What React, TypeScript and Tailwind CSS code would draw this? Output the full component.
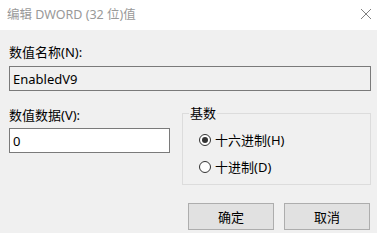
const font = { fontFamily: '"Noto Sans", "Noto Sans CJK SC", sans-serif' };

function Radio({ checked, label }: { checked?: boolean; label: string }) {
  return (
    <div className="flex items-center gap-[4px] h-[16px]">
      <span className="w-[12px] h-[12px] rounded-full border border-[#333333] bg-white flex items-center justify-center">
        {checked && <span className="w-[6px] h-[6px] rounded-full bg-[#333333]" />}
      </span>
      <span className="leading-[16px]">{label}</span>
    </div>
  );
}

export default function App() {
  return (
    <div className="w-[377px] h-[233px] bg-[#f0f0f0] text-[13px] text-black overflow-hidden" style={font}>
      <div className="h-[30px] bg-white flex items-center justify-between pl-[7px] pr-[5px]">
        <span className="text-[12.5px] text-[#999999] leading-[16px]">编辑 DWORD (32 位)值</span>
        <svg width="12" height="12" viewBox="0 0 12 12" className="-mt-[3px]">
          <path d="M1 1 L11 11 M11 1 L1 11" stroke="#808080" strokeWidth="1" fill="none" />
        </svg>
      </div>

      <div className="pl-[9px] pr-[6px] pt-[14px]">
        <div className="leading-[16px]">数值名称(N):</div>
        <div className="mt-[6px] h-[25px] border border-[#7a7a7a] bg-[#f0f0f0] flex items-center px-[3px] leading-[16px]">
          EnabledV9
        </div>

        <div className="mt-[16px] flex">
          <div className="w-[161px]">
            <div className="leading-[16px]">数值数据(V):</div>
            <div className="mt-[5px] h-[25px] border border-[#7a7a7a] bg-white flex items-center px-[3px] leading-[16px]">
              0
            </div>
          </div>
          <fieldset className="ml-[12px] flex-1 border border-[#dcdcdc] h-[78px]">
            <legend className="ml-[6px] px-[1px] leading-[12px]">基数</legend>
            <div className="pl-[16px] pt-[13px] flex flex-col gap-[11px]">
              <Radio checked label="十六进制(H)" />
              <Radio label="十进制(D)" />
            </div>
          </fieldset>
        </div>

        <div className="mt-[18px] flex justify-end gap-[10px] pr-[1px]">
          <button className="w-[86px] h-[27px] border border-[#adadad] bg-[#e1e1e1] leading-[16px]">确定</button>
          <button className="w-[86px] h-[27px] border border-[#adadad] bg-[#e1e1e1] leading-[16px]">取消</button>
        </div>
      </div>
    </div>
  );
}
